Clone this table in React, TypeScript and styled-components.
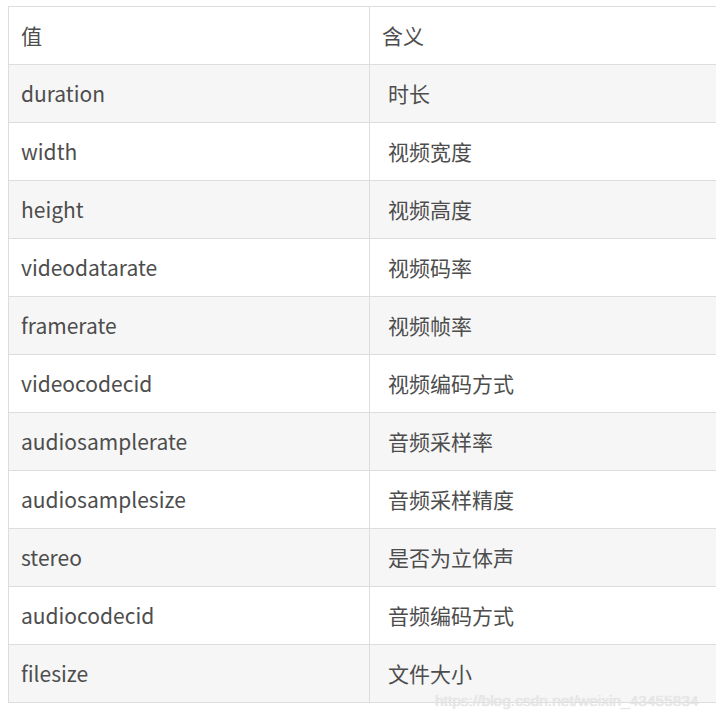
import React from "react";
import styled, { createGlobalStyle } from "styled-components";

const GlobalStyle = createGlobalStyle`
  html, body {
    margin: 0;
    padding: 0;
    background: #ffffff;
    overflow: hidden;
  }
  body {
    font-family: "Noto Sans CJK SC", "Noto Sans", sans-serif;
  }
`;

const rows: [string, string][] = [
  ["duration", "时长"],
  ["width", "视频宽度"],
  ["height", "视频高度"],
  ["videodatarate", "视频码率"],
  ["framerate", "视频帧率"],
  ["videocodecid", "视频编码方式"],
  ["audiosamplerate", "音频采样率"],
  ["audiosamplesize", "音频采样精度"],
  ["stereo", "是否为立体声"],
  ["audiocodecid", "音频编码方式"],
  ["filesize", "文件大小"],
];

const App = () => {
  return (
    <Page>
      <GlobalStyle />
      <Table>
        <colgroup>
          <col style={{ width: 361 }} />
          <col style={{ width: 400 }} />
        </colgroup>
        <thead>
          <Row>
            <Cell as="th">值</Cell>
            <Cell as="th">含义</Cell>
          </Row>
        </thead>
        <tbody>
          {rows.map(([key, meaning], i) => (
            <Row key={key} striped={i % 2 === 0}>
              <Cell>{key}</Cell>
              <Cell indent>{meaning}</Cell>
            </Row>
          ))}
        </tbody>
      </Table>
      <Watermark>https://blog.csdn.net/weixin_43455834</Watermark>
    </Page>
  );
};

export default App;

const Page = styled.div`
  position: relative;
  width: 716px;
  height: 720px;
  padding: 6px 0 0 8px;
  box-sizing: border-box;
  overflow: hidden;
`;

const Table = styled.table`
  border-collapse: collapse;
  table-layout: fixed;
  width: 761px;
  color: #4d4d4d;
  font-size: 21px;
`;

const Row = styled.tr<{ striped?: boolean }>`
  height: 58px;
  background: ${({ striped }) => (striped ? "#f6f6f6" : "#ffffff")};
`;

const Cell = styled.td<{ indent?: boolean }>`
  border: 1px solid #dddddd;
  padding: 0 0 2px ${({ indent }) => (indent ? "18px" : "12px")};
  text-align: left;
  font-weight: 400;
  vertical-align: middle;
  white-space: nowrap;
`;

const Watermark = styled.div`
  position: absolute;
  left: 435px;
  top: 692px;
  font-family: "Liberation Sans", Arial, sans-serif;
  font-size: 15.5px;
  color: #e8e8e8;
  text-shadow: 0 0 1px #d4d4d4;
  white-space: nowrap;
`;
